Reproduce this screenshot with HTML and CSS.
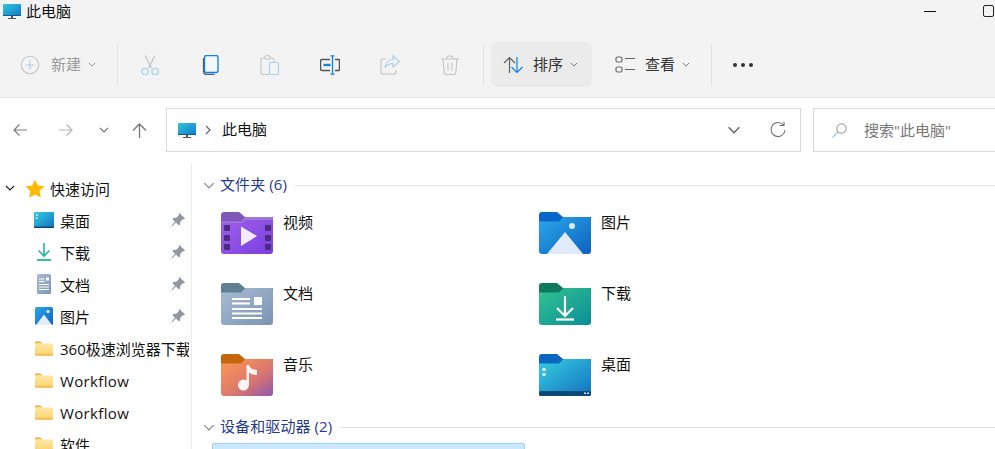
FILE: index.html
```html
<!DOCTYPE html>
<html lang="zh-CN">
<head>
<meta charset="utf-8">
<title>此电脑</title>
<link rel="stylesheet" href="styles.css">
</head>
<body>
<svg class="defs" width="0" height="0" aria-hidden="true">
  <defs>
    <linearGradient id="gMon" x1="0" y1="0" x2="1" y2="1"><stop offset="0" stop-color="#2fc6dc"/><stop offset="1" stop-color="#1478c8"/></linearGradient>
    <linearGradient id="gPurple" x1="0" y1="0" x2="1" y2="1"><stop offset="0" stop-color="#a060e8"/><stop offset="1" stop-color="#7a3fe0"/></linearGradient>
    <linearGradient id="gBlue" x1="0" y1="0" x2="1" y2="1"><stop offset="0" stop-color="#2aa8ea"/><stop offset="1" stop-color="#0d62be"/></linearGradient>
    <linearGradient id="gGrey" x1="0" y1="0" x2="1" y2="1"><stop offset="0" stop-color="#a9bdd3"/><stop offset="1" stop-color="#7b93b3"/></linearGradient>
    <linearGradient id="gGreen" x1="0" y1="0" x2="1" y2="1"><stop offset="0" stop-color="#33c48f"/><stop offset="1" stop-color="#0a8d98"/></linearGradient>
    <linearGradient id="gOrange" x1="0" y1="0" x2="1" y2="1"><stop offset="0" stop-color="#ff9a50"/><stop offset="0.6" stop-color="#d9766f"/><stop offset="1" stop-color="#8d58b0"/></linearGradient>
    <linearGradient id="gDesk" x1="0" y1="0" x2="1" y2="1"><stop offset="0" stop-color="#34cfe0"/><stop offset="1" stop-color="#1470c0"/></linearGradient>
    <linearGradient id="gYellow" x1="0" y1="0" x2="0" y2="1"><stop offset="0" stop-color="#ffe9a8"/><stop offset="1" stop-color="#fdd06a"/></linearGradient>
    <symbol id="monitor" viewBox="0 0 18 15"><rect width="18" height="12" rx="1" fill="url(#gMon)"/><rect y="11" width="18" height="1" fill="#0e5f8e"/><rect x="8" y="12" width="2" height="2" fill="#555"/><rect x="5" y="14" width="8" height="1" fill="#555"/></symbol>
    <symbol id="chev" viewBox="0 0 10 6"><path d="M1 1l4 4 4-4" fill="none" stroke="currentColor" stroke-width="1.1"/></symbol>
    <symbol id="pin" viewBox="0 0 14 14"><path d="M8.500 0L14 5.500L12.800 6.500L11.800 6.200L9 9L9.200 11.300L8 12.500L5 9.500L1 13.500L.3 13L4 8.800L1.300 6L2.500 4.800L5 5L7.800 2.200L7.500 1.200Z" fill="#8e98a3"/></symbol>
    <symbol id="smallfolder" viewBox="0 0 18 15"><path d="M0 1.500A1 1 0 0 1 1 .500h4.500L7.500 2.500H0z" fill="#f5b21f"/><rect y="2.500" width="18" height="12" rx=".8" fill="url(#gYellow)"/><rect y="13.500" width="18" height="1" fill="#eaa92a"/></symbol>
  </defs>
</svg>

<header class="titlebar">
  <svg class="ico-monitor"><use href="#monitor"/></svg>
  <span class="title">此电脑</span>
  <span class="win-min"></span>
  <span class="win-max"></span>
</header>

<section class="toolbar">
  <div class="tb-new">
    <svg class="tb-svg" viewBox="0 0 20 20"><circle cx="10" cy="10" r="8.700" fill="none" stroke="#c4c4c4" stroke-width="1.100"/><path d="M10 5.500v9M5.500 10h9" stroke="#a8d0ef" stroke-width="1.100"/></svg>
    <span class="tb-label muted">新建</span>
    <svg class="tb-chev muted"><use href="#chev"/></svg>
  </div>
  <span class="tb-sep"></span>
  <div class="tb-btn">
    <svg class="tb-svg" viewBox="0 0 20 20"><path d="M5 .5l6.500 12.500M15 .5L8.500 13" fill="none" stroke="#bdbdbd" stroke-width="1.100"/><circle cx="5" cy="16.500" r="3.200" fill="none" stroke="#a8d0ef" stroke-width="1.300"/><circle cx="15" cy="16.500" r="3.200" fill="none" stroke="#a8d0ef" stroke-width="1.300"/></svg>
  </div>
  <div class="tb-btn">
    <svg class="tb-svg" viewBox="0 0 20 20"><path d="M3.500 3v13.500a3 3 0 0 0 3 3h8" fill="none" stroke="#5a5a5a" stroke-width="1.300"/><rect x="4.500" y=".5" width="13.500" height="17" rx="2" fill="#f3f6fa" stroke="#1282e0" stroke-width="1.300"/></svg>
  </div>
  <div class="tb-btn">
    <svg class="tb-svg" viewBox="0 0 20 20"><path d="M9 19.500H3a2 2 0 0 1-2-2V5a2 2 0 0 1 2-2h9a2 2 0 0 1 2 2v2" fill="none" stroke="#c4c4c4" stroke-width="1.100"/><rect x="5" y=".8" width="5" height="3.500" rx="1" fill="#f3f3f3" stroke="#c4c4c4" stroke-width="1.100"/><rect x="9.500" y="7.500" width="9" height="12" rx="1.500" fill="none" stroke="#a8d0ef" stroke-width="1.200"/></svg>
  </div>
  <div class="tb-btn">
    <svg class="tb-svg" viewBox="0 0 20 20"><path d="M10 4.500H2a1.500 1.500 0 0 0-1.500 1.500v8A1.500 1.500 0 0 0 2 15.500h8M15 4.500h3.500a1 1 0 0 1 1 1v9a1 1 0 0 1-1 1H15" fill="none" stroke="#555" stroke-width="1.500"/><path d="M12.500 .8v18.400M10.500 .8h4M10.500 19.200h4" stroke="#1282e0" stroke-width="1.300" fill="none"/><path d="M3.500 10h7" stroke="#1282e0" stroke-width="2.400"/></svg>
  </div>
  <div class="tb-btn">
    <svg class="tb-svg" viewBox="0 0 20 20"><path d="M6 4H3a2 2 0 0 0-2 2v11a2 2 0 0 0 2 2h11a2 2 0 0 0 2-2v-2" fill="none" stroke="#c4c4c4" stroke-width="1.100"/><path d="M13 1l6.500 5.500L13 12V8.500C9 8.500 6.500 10 5 13c.5-5 3.500-8.500 8-8.500z" fill="none" stroke="#a8d0ef" stroke-width="1.200"/></svg>
  </div>
  <div class="tb-btn">
    <svg class="tb-svg" viewBox="0 0 20 20"><path d="M1 4h18M7 4V2.500A1.500 1.500 0 0 1 8.500 1h3A1.500 1.500 0 0 1 13 2.500V4M3 4l1.200 13.500A2 2 0 0 0 6.200 19.500h7.600a2 2 0 0 0 2-2L17 4" fill="none" stroke="#c4c4c4" stroke-width="1.100"/><path d="M8 8v7.500M12 8v7.500" stroke="#c4c4c4" stroke-width="1.100"/></svg>
  </div>
  <span class="tb-sep tb-sep-b"></span>
  <div class="tb-drop tb-active">
    <svg class="tb-svg" viewBox="0 0 20 20"><path d="M6.500 18V2.500M1 8l5.500-5.500L12 8" fill="none" stroke="#5f5f5f" stroke-width="1.200"/><path d="M14 2v15.500M8.500 12l5.500 5.500 5.500-5.500" fill="none" stroke="#1282e0" stroke-width="1.200"/></svg>
    <span class="tb-label">排序</span>
    <svg class="tb-chev"><use href="#chev"/></svg>
  </div>
  <div class="tb-drop tb-view">
    <svg class="tb-svg" viewBox="0 0 20 20"><rect x="1" y="2" width="6" height="5" rx="1.500" fill="none" stroke="#666" stroke-width="1.200"/><rect x="1" y="12" width="6" height="5" rx="1.500" fill="none" stroke="#666" stroke-width="1.200"/><path d="M10 3.500h10M10 14.500h10" stroke="#666" stroke-width="1.200"/></svg>
    <span class="tb-label">查看</span>
    <svg class="tb-chev"><use href="#chev"/></svg>
  </div>
  <span class="tb-sep tb-sep-c"></span>
  <div class="tb-more"><i></i><i></i><i></i></div>
</section>

<nav class="navbar">
  <svg class="nav-back" viewBox="0 0 14 14"><path d="M14 7H1M6.500 1.500L1 7l5.500 5.500" fill="none" stroke="#7c7c7c" stroke-width="1.200"/></svg>
  <svg class="nav-fwd" viewBox="0 0 14 14"><path d="M0 7h13M7.500 1.500L13 7l-5.500 5.500" fill="none" stroke="#b4b4b4" stroke-width="1.200"/></svg>
  <svg class="nav-down"><use href="#chev"/></svg>
  <svg class="nav-up" viewBox="0 0 15 15"><path d="M7.500 15V1M1 7.500L7.500 1 14 7.500" fill="none" stroke="#777" stroke-width="1.300"/></svg>
  <div class="address">
    <svg class="ico-monitor"><use href="#monitor"/></svg>
    <svg class="addr-sep" viewBox="0 0 6 10"><path d="M1 1l4 4-4 4" fill="none" stroke="#666" stroke-width="1.200"/></svg>
    <span class="addr-text">此电脑</span>
    <svg class="addr-chev"><use href="#chev"/></svg>
    <svg class="addr-refresh" viewBox="0 0 16 16"><path d="M13.500 3.200A7 7 0 1 0 15 8" fill="none" stroke="#707070" stroke-width="1.100"/><path d="M9.500 3.500h4.500V-.5" fill="none" stroke="#707070" stroke-width="1.100"/></svg>
  </div>
  <div class="search">
    <svg class="search-ico" viewBox="0 0 15 15"><circle cx="9.500" cy="5.500" r="4.700" fill="none" stroke="#8a8a8a" stroke-width="1"/><path d="M6 9L.5 14.500" stroke="#a8bcd0" stroke-width="1.100"/></svg>
    <span class="search-text">搜索"此电脑"</span>
  </div>
</nav>

<main class="main">
  <aside class="sidebar">
    <div class="row row-top">
      <svg class="row-chev"><use href="#chev"/></svg>
      <svg class="star" viewBox="0 0 20 19"><path d="M10 .5l2.900 6 6.600.8-4.900 4.500 1.300 6.500L10 15.500l-5.900 3.300 1.300-6.500L.5 7.300l6.600-.8z" fill="#fdb900"/></svg>
      <span class="label">快速访问</span>
    </div>
    <div class="row">
      <span class="row-ico"><svg class="i-desk" viewBox="0 0 20 16"><rect width="20" height="16" rx="1" fill="url(#gDesk)"/><rect y="14.500" width="20" height="1.500" fill="#0b4a78"/><rect x="2" y="2.500" width="1.500" height="1.500" fill="#fff"/><rect x="2" y="5.500" width="1.500" height="1.500" fill="#fff"/></svg></span>
      <span class="label">桌面</span>
      <svg class="pin"><use href="#pin"/></svg>
    </div>
    <div class="row">
      <span class="row-ico"><svg class="i-dl" viewBox="0 0 14 18"><path d="M7 0v12.500M1.500 7.500L7 13l5.500-5.500" fill="none" stroke="#22b79a" stroke-width="1.600"/><path d="M0 17h14" stroke="#22b79a" stroke-width="1.800"/></svg></span>
      <span class="label">下载</span>
      <svg class="pin"><use href="#pin"/></svg>
    </div>
    <div class="row">
      <span class="row-ico"><svg class="i-doc" viewBox="0 0 14 20"><rect width="14" height="20" rx="1.500" fill="url(#gGrey)"/><path d="M2 5h5.500M2 7.500h5.500M2 10.500h10M2 13h10M2 15.500h10" stroke="#fff" stroke-width="1"/><rect x="9" y="3.500" width="3" height="3" fill="#fff"/></svg></span>
      <span class="label">文档</span>
      <svg class="pin"><use href="#pin"/></svg>
    </div>
    <div class="row">
      <span class="row-ico"><svg class="i-pic" viewBox="0 0 18 18"><rect width="18" height="18" rx="1.500" fill="url(#gBlue)"/><circle cx="13" cy="4.500" r="1.500" fill="#fff"/><path d="M1 18L9 7.500 17 18z" fill="#e4ecfb"/></svg></span>
      <span class="label">图片</span>
      <svg class="pin"><use href="#pin"/></svg>
    </div>
    <div class="row"><span class="row-ico"><svg class="i-folder"><use href="#smallfolder"/></svg></span><span class="label">360极速浏览器下载</span></div>
    <div class="row"><span class="row-ico"><svg class="i-folder"><use href="#smallfolder"/></svg></span><span class="label label-latin">Workflow</span></div>
    <div class="row"><span class="row-ico"><svg class="i-folder"><use href="#smallfolder"/></svg></span><span class="label label-latin">Workflow</span></div>
    <div class="row"><span class="row-ico"><svg class="i-folder"><use href="#smallfolder"/></svg></span><span class="label">软件</span></div>
  </aside>

  <section class="content">
    <div class="group-head">
      <svg class="group-chev"><use href="#chev"/></svg>
      <span class="group-title">文件夹 (6)</span>
      <span class="group-line"></span>
    </div>
    <div class="folders">
      <div class="folder">
        <svg class="folder-ico" viewBox="0 0 52 42"><path d="M0 3a3 3 0 0 1 3-3h15l6 5H52v8H0z" fill="#7e57b8"/><path d="M0 9.500h20l4.500-4.500H50a2 2 0 0 1 2 2v32a3 3 0 0 1-3 3H3a3 3 0 0 1-3-3z" fill="url(#gPurple)"/><path d="M0 9.500h20l4.500-4.500H50a2 2 0 0 1 2 2v1H25l-4.500 3H0z" fill="#a88fd0" opacity=".6"/><g fill="#4c2c80"><rect x="3" y="13" width="6" height="6" rx="1"/><rect x="3" y="23" width="6" height="6" rx="1"/><rect x="3" y="32" width="6" height="6" rx="1"/><rect x="44" y="13" width="6" height="6" rx="1"/><rect x="44" y="23" width="6" height="6" rx="1"/><rect x="44" y="32" width="6" height="6" rx="1"/></g><path d="M20 14.500L36 24 20 34z" fill="#f3ecff"/></svg>
        <span class="folder-name">视频</span>
      </div>
      <div class="folder">
        <svg class="folder-ico" viewBox="0 0 52 42"><path d="M0 3a3 3 0 0 1 3-3h15l6 5H52v8H0z" fill="#0a66c8"/><path d="M0 9.500h20l4.500-4.500H50a2 2 0 0 1 2 2v32a3 3 0 0 1-3 3H3a3 3 0 0 1-3-3z" fill="url(#gBlue)"/><circle cx="33" cy="14" r="3" fill="#dbe8fb"/><path d="M8 42l18-22 18 22z" fill="#e1eafb"/></svg>
        <span class="folder-name">图片</span>
      </div>
      <div class="folder">
        <svg class="folder-ico" viewBox="0 0 52 42"><path d="M0 3a3 3 0 0 1 3-3h15l6 5H52v8H0z" fill="#5f7f92"/><path d="M0 9.500h20l4.500-4.500H50a2 2 0 0 1 2 2v32a3 3 0 0 1-3 3H3a3 3 0 0 1-3-3z" fill="url(#gGrey)"/><path d="M11 16h18M11 20.500h18M11 26h30M11 30.500h30M11 35h30" stroke="#fff" stroke-width="2"/><rect x="33" y="14" width="8" height="8" fill="#fff"/></svg>
        <span class="folder-name">文档</span>
      </div>
      <div class="folder">
        <svg class="folder-ico" viewBox="0 0 52 42"><path d="M0 3a3 3 0 0 1 3-3h15l6 5H52v8H0z" fill="#0b7a5e"/><path d="M0 9.500h20l4.500-4.500H50a2 2 0 0 1 2 2v32a3 3 0 0 1-3 3H3a3 3 0 0 1-3-3z" fill="url(#gGreen)"/><path d="M26 13v19M18 25l8 8 8-8" fill="none" stroke="#fff" stroke-width="2.200"/><path d="M17 36.500h18" stroke="#fff" stroke-width="2.200"/></svg>
        <span class="folder-name">下载</span>
      </div>
      <div class="folder">
        <svg class="folder-ico" viewBox="0 0 52 42"><path d="M0 3a3 3 0 0 1 3-3h15l6 5H52v8H0z" fill="#c4660e"/><path d="M0 9.500h20l4.500-4.500H50a2 2 0 0 1 2 2v32a3 3 0 0 1-3 3H3a3 3 0 0 1-3-3z" fill="url(#gOrange)"/><path d="M25.500 11h2.500c.5 3 3 4.500 8 5v5c-3 0-5.500-.8-8-2.200V31a5.500 5.500 0 1 1-2.500-4.600z" fill="#fbf6f4"/></svg>
        <span class="folder-name">音乐</span>
      </div>
      <div class="folder">
        <svg class="folder-ico" viewBox="0 0 52 42"><path d="M0 3a3 3 0 0 1 3-3h15l6 5H52v8H0z" fill="#0a66c0"/><path d="M0 9.500h20l4.500-4.500H50a2 2 0 0 1 2 2v32a3 3 0 0 1-3 3H3a3 3 0 0 1-3-3z" fill="url(#gDesk)"/><rect y="37" width="52" height="5" rx="1.500" fill="#0b4a78"/><rect x="3.500" y="14" width="3" height="3" fill="#e3f6fb"/><rect x="3.500" y="19" width="3" height="3" fill="#e3f6fb"/><rect x="45" y="38.500" width="2" height="1.500" fill="#cfe6f2"/><rect x="48" y="38.500" width="2" height="1.500" fill="#cfe6f2"/></svg>
        <span class="folder-name">桌面</span>
      </div>
    </div>
    <div class="group-head">
      <svg class="group-chev"><use href="#chev"/></svg>
      <span class="group-title">设备和驱动器 (2)</span>
      <span class="group-line"></span>
    </div>
    <div class="drive"></div>
  </section>
</main>
</body>
</html>
```

FILE: styles.css
```css
* { box-sizing: border-box; }
html, body { margin: 0; height: 449px; overflow: hidden; background: #fff; }
body {
  width: 995px;
  font-family: "Open Sans", "Noto Sans CJK SC", sans-serif;
  font-size: 15px;
  color: #111;
}
svg { display: block; flex: none; }
.defs { position: absolute; }

.titlebar { height: 22px; background: #f3f3f3; display: flex; align-items: center; padding-left: 3px; }
.ico-monitor { width: 18px; height: 15px; }
.title { margin-left: 5px; line-height: 22px; }
.win-min { width: 12px; height: 1px; background: #111; margin-left: auto; }
.win-max { width: 11px; height: 12px; border: 1px solid #222; border-radius: 2px; margin: 0 1px 0 47px; }

.toolbar { height: 76px; padding: 20px 0 10px; background: #f3f3f3; border-bottom: 1px solid #e5e5e5; display: flex; align-items: center; }
.tb-new { width: 105px; margin-left: 12px; padding-left: 8px; display: flex; align-items: center; }
.tb-svg { width: 20px; height: 20px; }
.tb-label { margin-left: 11px; padding-bottom: 2px; color: #333; }
.tb-label.muted { color: #9a9a9a; }
.tb-chev { width: 8px; height: 5px; margin-left: 7px; color: #6a6a6a; }
.tb-chev.muted { color: #888; }
.tb-sep { width: 1px; height: 40px; background: #e2e2e2; flex: none; }
.tb-btn { width: 60px; height: 45px; display: flex; align-items: center; justify-content: center; }
.tb-sep + .tb-btn { margin-left: 2px; }
.tb-sep-b { margin-left: 3px; }
.tb-drop { height: 45px; display: flex; align-items: center; padding-left: 12px; }
.tb-drop .tb-label { margin-left: 10px; }
.tb-active { width: 101px; margin-left: 7px; background: #ebebeb; border-radius: 6px; }
.tb-view { width: 104px; margin-left: 8px; padding-left: 15px; }
.tb-sep-c { margin-left: 7px; }
.tb-more { display: flex; gap: 4px; margin-left: 21px; }
.tb-more i { width: 4px; height: 4px; border-radius: 50%; background: #333; }

.navbar { height: 64px; padding: 10px 0 10px 13px; display: flex; align-items: center; }
.nav-back, .nav-fwd { width: 14px; height: 14px; }
.nav-back { margin-right: 32px; }
.nav-fwd { margin-right: 26px; }
.nav-down { width: 10px; height: 6px; margin-right: 23px; color: #777; }
.nav-up { width: 15px; height: 15px; margin-right: 19px; }
.address { width: 635px; height: 44px; border: 1px solid #d9d9d9; padding-left: 11px; display: flex; align-items: center; flex: none; }
.addr-sep { width: 6px; height: 10px; margin-left: 9px; }
.addr-text { margin-left: 11px; padding-bottom: 3px; }
.addr-chev { width: 14px; height: 8px; margin-left: auto; color: #666; }
.addr-refresh { width: 16px; height: 16px; margin: 0 14px 0 29px; overflow: visible; }
.search { width: 200px; height: 44px; margin-left: 12px; border: 1px solid #d9d9d9; padding-left: 18px; display: flex; align-items: center; flex: none; }
.search-ico { width: 15px; height: 15px; }
.search-text { margin-left: 17px; padding-bottom: 2px; color: #777; }

.main { display: flex; height: 287px; }
.sidebar { width: 192px; height: 287px; margin-top: 1px; border-right: 1px solid #ececec; padding-top: 9px; overflow: hidden; flex: none; }
.row { width: 189px; height: 32px; padding-left: 34px; display: flex; align-items: center; }
.row-top { padding-left: 5px; }
.row-chev { width: 10px; height: 6px; color: #222; }
.star { width: 20px; height: 19px; margin-left: 10px; }
.row-top .label { margin-left: 5px; flex: none; }
.row-ico { width: 20px; display: flex; justify-content: center; flex: none; }
.i-desk { width: 20px; height: 16px; }
.i-dl { width: 14px; height: 18px; }
.i-doc { width: 14px; height: 20px; }
.i-pic { width: 18px; height: 18px; }
.i-folder { width: 18px; height: 15px; }
.label { margin-left: 6px; color: #111; white-space: nowrap; overflow: hidden; flex: 1; min-width: 0; }
.label-latin { letter-spacing: .35px; padding-top: 2px; }
.pin { width: 14px; height: 14px; margin-right: 4px; }

.content { flex: 1; min-width: 0; padding: 13px 0 0 11px; }
.group-head { height: 20px; display: flex; align-items: center; }
.group-chev { width: 12px; height: 7px; color: #8a8a8a; }
.group-title { margin-left: 5px; padding-bottom: 2px; color: #1f3b8f; white-space: nowrap; line-height: 20px; letter-spacing: .1px; }
.group-line { flex: 1; height: 1px; background: #e2e2e2; margin-left: 8px; }
.folders { margin: 17px 0 21px 9px; display: grid; grid-template-columns: 318px 318px; grid-auto-rows: 42px; row-gap: 29px; }
.folder { padding-left: 9px; display: flex; align-items: flex-start; }
.folder-ico { width: 52px; height: 42px; }
.folder-name { margin-left: 10px; line-height: 20px; color: #111; }
.drive { width: 313px; height: 60px; margin: 6px 0 0 9px; background: #cce8ff; border: 1px solid #99d1ff; border-radius: 2px; }
```
